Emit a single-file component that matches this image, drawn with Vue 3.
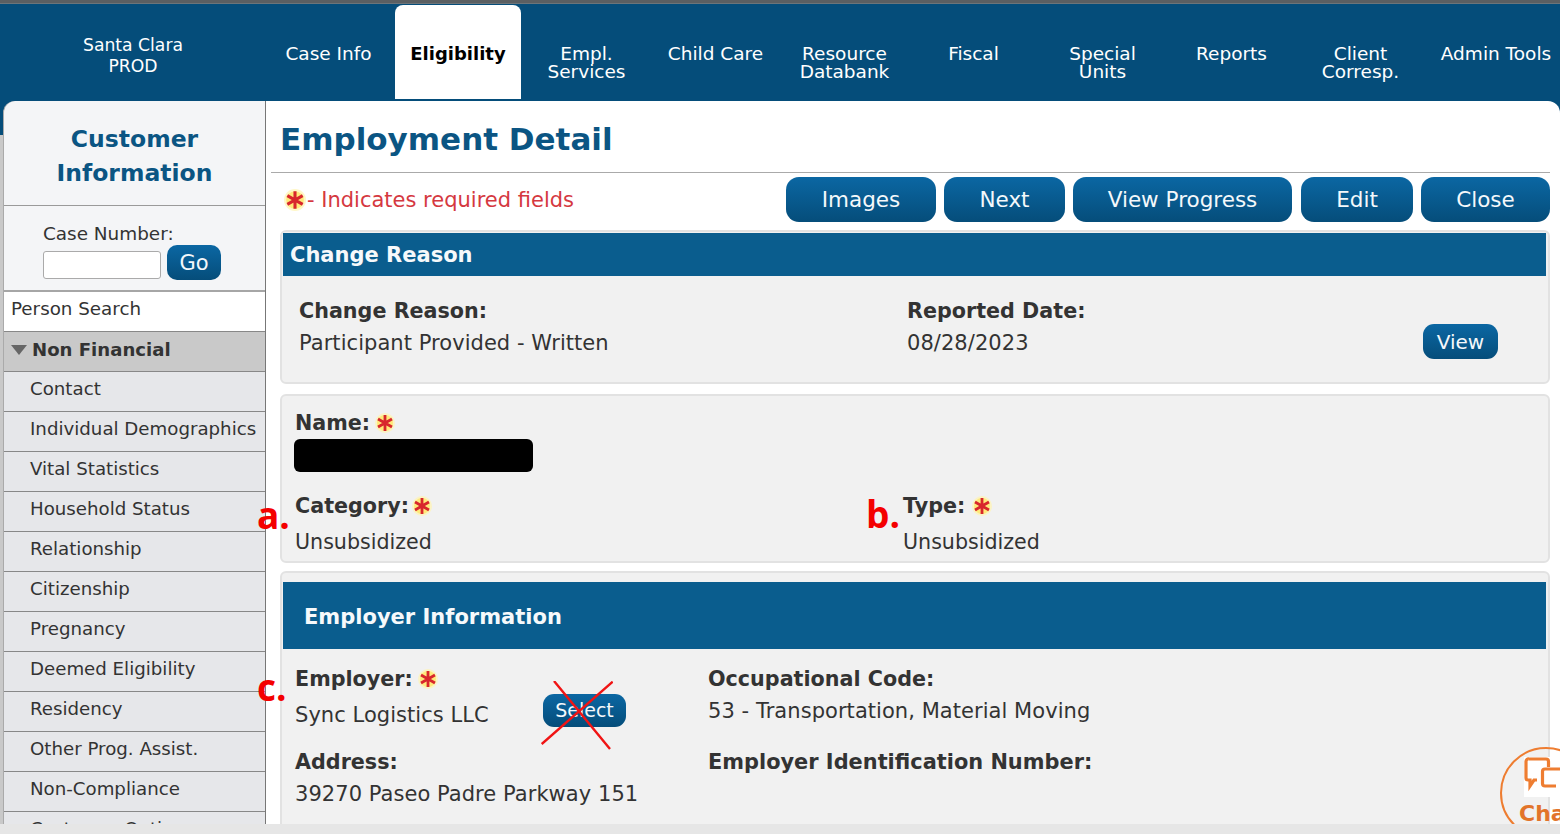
<script setup>
const navItems = [
  { label: ['Case Info'] },
  { label: ['Eligibility'], active: true },
  { label: ['Empl.', 'Services'] },
  { label: ['Child Care'] },
  { label: ['Resource', 'Databank'] },
  { label: ['Fiscal'] },
  { label: ['Special', 'Units'] },
  { label: ['Reports'] },
  { label: ['Client', 'Corresp.'] },
  { label: ['Admin Tools'] }
]
const sideItems = ['Contact', 'Individual Demographics', 'Vital Statistics', 'Household Status', 'Relationship', 'Citizenship', 'Pregnancy', 'Deemed Eligibility', 'Residency', 'Other Prog. Assist.', 'Non-Compliance', 'Customer Options']
const actions = [
  { label: 'Images', cls: 'w-images' },
  { label: 'Next', cls: 'w-next' },
  { label: 'View Progress', cls: 'w-progress' },
  { label: 'Edit', cls: 'w-edit' },
  { label: 'Close', cls: 'w-close' }
]
</script>

<template>
  <div class="page">
    <svg class="defs" width="0" height="0">
      <defs>
        <symbol id="req" viewBox="0 0 20 20">
          <circle cx="10" cy="10" r="10" fill="#fff3b0" opacity="0.7" />
          <circle cx="10" cy="10" r="8" fill="#ffe97a" />
          <path d="M10 2v16M3 6l14 8M17 6L3 14" stroke="#d8262c" stroke-width="2.800" fill="none" />
        </symbol>
      </defs>
    </svg>

    <div class="topstrip"></div>

    <header class="nav">
      <div class="org">Santa Clara<br />PROD</div>
      <div class="tabs">
        <div v-for="item in navItems" :key="item.label[0]" class="tab" :class="{ active: item.active }">
          <span v-for="line in item.label" :key="line">{{ line }}</span>
        </div>
      </div>
    </header>

    <div class="body">
      <aside class="side">
        <h2 class="side-title">Customer<br />Information</h2>
        <div class="case">
          <label class="case-label">Case Number:</label>
          <div class="case-row">
            <input class="case-input" type="text" />
            <button class="btn go">Go</button>
          </div>
        </div>
        <div class="person">Person Search</div>
        <div class="group"><span class="tri"></span>Non Financial</div>
        <div v-for="s in sideItems" :key="s" class="side-item">{{ s }}</div>
      </aside>

      <main class="main">
        <h1 class="title">Employment Detail</h1>
        <div class="toolbar">
          <div class="req-note">
            <svg class="req note-star"><use href="#req" /></svg>- Indicates required fields
          </div>
          <div class="actions">
            <button v-for="a in actions" :key="a.label" class="btn action" :class="a.cls">{{ a.label }}</button>
          </div>
        </div>

        <section class="panel reason">
          <h3 class="panel-head">Change Reason</h3>
          <div class="reason-body">
            <div class="reason-col first">
              <div class="lbl">Change Reason:</div>
              <div class="val">Participant Provided - Written</div>
            </div>
            <div class="reason-col second">
              <div class="lbl">Reported Date:</div>
              <div class="val">08/28/2023</div>
            </div>
            <button class="btn view">View</button>
          </div>
        </section>

        <section class="panel name-panel">
          <div class="lbl">Name:<svg class="req star"><use href="#req" /></svg></div>
          <div class="redact"></div>
          <div class="cat-row">
            <div class="cat-col">
              <div class="lbl">Category:<svg class="req star tight"><use href="#req" /></svg></div>
              <div class="val cat-val">Unsubsidized</div>
            </div>
            <div class="cat-col">
              <div class="lbl">Type:<svg class="req star wide"><use href="#req" /></svg></div>
              <div class="val cat-val">Unsubsidized</div>
            </div>
          </div>
        </section>

        <section class="panel employer">
          <h3 class="panel-head big">Employer Information</h3>
          <div class="emp-grid">
            <div class="emp-left">
              <div class="lbl">Employer:<svg class="req star"><use href="#req" /></svg></div>
              <div class="emp-row">
                <div class="val">Sync Logistics LLC</div>
                <button class="btn select">Select</button>
              </div>
              <div class="lbl addr">Address:</div>
              <div class="val addr-val">39270 Paseo Padre Parkway 151</div>
            </div>
            <div class="emp-right">
              <div class="lbl">Occupational Code:</div>
              <div class="val occ">53 - Transportation, Material Moving</div>
              <div class="lbl ein">Employer Identification Number:</div>
            </div>
          </div>
        </section>
      </main>

      <span class="mark mark-a">a.</span>
      <span class="mark mark-b">b.</span>
      <span class="mark mark-c">c.</span>
      <svg class="cross" viewBox="0 0 72 72">
        <path d="M13 0L69 68M71.700 .7L.7 63" stroke="#f01414" stroke-width="2.400" fill="none" />
      </svg>
    </div>

    <div class="chat">
      <svg class="chat-icon" viewBox="0 0 40 40">
        <rect width="40" height="40" fill="#fff" />
        <path d="M5 2h17a2.500 2.500 0 0 1 2.500 2.500V10M13 23H10l-4 6v-6H4a2 2 0 0 1-2-2V4.500A2.500 2.500 0 0 1 5 2" fill="none" stroke="#ee7d31" stroke-width="3.200" />
        <path d="M21 12h16a2.500 2.500 0 0 1 2.500 2.500V40M32 29H21a2.500 2.500 0 0 1-2.500-2.500v-12A2.500 2.500 0 0 1 21 12" fill="none" stroke="#ee7d31" stroke-width="3.200" />
      </svg>
      <span class="chat-text">Chat</span>
    </div>

    <footer class="bottom"></footer>
  </div>
</template>

<style scoped>
.page {
  position: relative;
  width: 1560px;
  height: 834px;
  overflow: hidden;
  display: flex;
  flex-direction: column;
  background: #fff;
  font-family: "DejaVu Sans", Verdana, sans-serif;
  color: #333;
}
.defs { position: absolute; }
.topstrip {
  flex: none;
  height: 4px;
  background: linear-gradient(#5b5f62 0 3px, #7d8a92);
}
.nav {
  flex: none;
  height: 97px;
  display: flex;
  background: #054d7a;
  color: #fff;
}
.org {
  flex: none;
  width: 266px;
  padding-top: 31px;
  text-align: center;
  font-size: 17.200px;
  line-height: 21px;
}
.tabs {
  display: grid;
  grid-template-columns: repeat(9, 129px) 1fr;
  margin-left: -2px;
  flex: 1;
}
.tab {
  display: flex;
  flex-direction: column;
  align-items: center;
  padding-top: 41px;
  font-size: 18.500px;
  line-height: 18px;
  white-space: nowrap;
}
.tab.active {
  margin: 1px 1px 2px 2px;
  padding-top: 40px;
  background: #fff;
  color: #000;
  font-weight: 700;
  font-size: 18px;
  border-radius: 8px 8px 0 0;
}
.tab:last-child { padding-left: 7px; }

.body {
  position: relative;
  flex: 1;
  min-height: 0;
  display: flex;
  background: linear-gradient(#054d7a 0 34px, #fff 34px);
  overflow: hidden;
}
.body::after {
  content: "";
  position: absolute;
  left: 0;
  top: 34px;
  width: 4px;
  bottom: 0;
  background: #c9c9c9;
}
.side {
  position: relative;
  z-index: 1;
  flex: none;
  width: 261px;
  background: #f4f5f7;
  border-right: 1px solid #777;
  border-left: 1px solid #aaa;
  margin-left: 3px;
  border-top-left-radius: 12px;
  overflow: hidden;
}
.side-title {
  margin: 0;
  height: 105px;
  box-sizing: border-box;
  padding-top: 21px;
  text-align: center;
  color: #0b5583;
  font-size: 23.500px;
  line-height: 34px;
  font-weight: 700;
  border-bottom: 1px solid #9a9a9a;
}
.case {
  height: 86px;
  box-sizing: border-box;
  padding: 18px 0 0 39px;
  border-bottom: 2px solid #a6a6a6;
}
.case-label {
  display: block;
  font-size: 18.400px;
  line-height: 20px;
}
.case-row {
  display: flex;
  align-items: flex-end;
  gap: 6px;
  margin-top: 1px;
}
.case-input {
  width: 118px;
  height: 28px;
  margin-bottom: 1px;
  box-sizing: border-box;
  background: #fff;
  border: 1px solid #aaa;
  border-radius: 3px;
  padding: 0;
}
.btn {
  border: none;
  color: #f4f8fb;
  font-family: inherit;
  background: linear-gradient(#0b67a3, #054d7a);
  padding: 0;
  white-space: nowrap;
  cursor: pointer;
}
.go {
  width: 54px;
  height: 35px;
  border-radius: 10px;
  font-size: 21px;
}
.person {
  height: 40px;
  box-sizing: border-box;
  padding: 5px 0 0 7px;
  background: #fff;
  font-size: 18.300px;
  line-height: 24px;
  border-bottom: 1px solid #888;
}
.group {
  height: 40px;
  box-sizing: border-box;
  padding: 0 0 4px 7px;
  display: flex;
  align-items: center;
  background: #c9c9c9;
  font-size: 18.100px;
  font-weight: 700;
  border-bottom: 1px solid #888;
}
.tri {
  width: 0;
  height: 0;
  margin-right: 5px;
  border-left: 8px solid transparent;
  border-right: 8px solid transparent;
  border-top: 10px solid #666;
}
.side-item {
  height: 40px;
  box-sizing: border-box;
  padding: 5px 0 0 26px;
  background: #e6e7ea;
  border-bottom: 1px solid #888;
  font-size: 18.200px;
  line-height: 24px;
  white-space: nowrap;
}

.main {
  flex: 1;
  min-width: 0;
  position: relative;
  z-index: 1;
  padding: 0 10px 0 14px;
  background: #fff;
  border-top-right-radius: 12px;
}
.title {
  margin: 0 0 0 -9px;
  height: 72px;
  box-sizing: border-box;
  padding: 18px 0 0 9px;
  font-size: 31px;
  line-height: 40px;
  font-weight: 700;
  color: #0b5583;
  border-bottom: 1px solid #aaa;
}
.toolbar {
  display: flex;
  justify-content: space-between;
  padding-top: 4px;
  height: 57px;
  box-sizing: border-box;
}
.req-note {
  display: flex;
  align-items: center;
  height: 45px;
  font-size: 21px;
  color: #d5383f;
  padding-left: 4px;
}
.req {
  width: 20px;
  height: 20px;
  vertical-align: -3px;
}
.note-star { width: 22px; height: 22px; margin-right: 1px; }
.star { margin-left: 5px; }
.star.tight { margin-left: 3px; }
.star.wide { margin-left: 7px; }
.actions {
  display: flex;
  gap: 8px;
}
.action {
  height: 45px;
  border-radius: 13px;
  font-size: 21.500px;
}
.w-images { width: 150px; }
.w-next { width: 121px; }
.w-progress { width: 219px; margin-right: 1px; }
.w-edit { width: 112px; }
.w-close { width: 129px; }

.panel {
  border: 2px solid #e2e2e2;
  border-radius: 6px;
  background: #f1f1f1;
  box-sizing: border-box;
}
.panel-head {
  margin: 1px 2px 0 1px;
  height: 43px;
  box-sizing: border-box;
  padding: 9px 0 0 7px;
  background: #0a5d8e;
  color: #f6f9fb;
  font-size: 21px;
  line-height: 27px;
  font-weight: 700;
}
.panel-head.big {
  height: 67px;
  padding: 22px 0 0 21px;
}
.reason { height: 154px; }
.reason-body {
  position: relative;
  display: flex;
  padding: 22px 0 0 17px;
}
.reason-col.first { width: 608px; }
.lbl {
  font-size: 20.700px;
  line-height: 27px;
  font-weight: 700;
  white-space: nowrap;
}
.val {
  font-size: 21px;
  letter-spacing: 0.05px;
  line-height: 27px;
  white-space: nowrap;
}
.reason-col .val { margin-top: 5px; }
.view {
  position: absolute;
  left: 1141px;
  top: 48px;
  width: 75px;
  height: 35px;
  border-radius: 11px;
  font-size: 20px;
}
.name-panel {
  margin-top: 10px;
  height: 169px;
  padding: 14px 0 0 13px;
}
.redact {
  width: 239px;
  height: 33px;
  margin: 2px 0 0 -1px;
  background: #000;
  border-radius: 6px;
}
.cat-row {
  display: flex;
  margin-top: 21px;
}
.cat-col:first-child { width: 608px; }
.cat-val { margin-top: 9px; font-size: 20.600px; letter-spacing: 0; }
.employer {
  margin-top: 8px;
  height: 300px;
}
.employer .panel-head { margin-top: 9px; }
.emp-grid {
  display: flex;
  padding: 17px 0 0 13px;
}
.emp-left { width: 413px; }
.emp-row {
  position: relative;
  margin-top: 9px;
}
.select {
  position: absolute;
  left: 248px;
  top: -8px;
  width: 83px;
  height: 33px;
  padding-bottom: 2px;
  border-radius: 11px;
  font-size: 19px;
}
.addr { margin-top: 20px; }
.addr-val { margin-top: 5px; }
.occ { margin-top: 5px; }
.ein { margin-top: 24px; font-size: 20.900px; }

.mark {
  position: absolute;
  z-index: 3;
  color: #f40000;
  font-family: "Open Sans", sans-serif;
  font-weight: 700;
  font-size: 37px;
  line-height: 40px;
}
.mark-a { left: 257px; top: 394px; }
.mark-b { left: 866px; top: 393px; }
.mark-c { left: 257px; top: 566px; }
.cross {
  position: absolute;
  z-index: 3;
  left: 541px;
  top: 580px;
  width: 72px;
  height: 72px;
}

.chat {
  position: absolute;
  z-index: 4;
  left: 1500px;
  top: 747px;
  width: 92px;
  height: 92px;
  box-sizing: border-box;
  border: 2px solid #ee7d31;
  border-radius: 50%;
}
.chat-icon {
  position: absolute;
  left: 22px;
  top: 8px;
  width: 40px;
  height: 40px;
}
.chat-text {
  position: absolute;
  left: 17px;
  top: 52px;
  color: #e2742a;
  font-size: 22px;
  line-height: 26px;
  font-weight: 700;
}
.bottom {
  position: relative;
  z-index: 5;
  flex: none;
  height: 10px;
  background: #e6e6e6;
}
</style>
<style>
html, body { margin: 0; background: #fff; }
</style>
